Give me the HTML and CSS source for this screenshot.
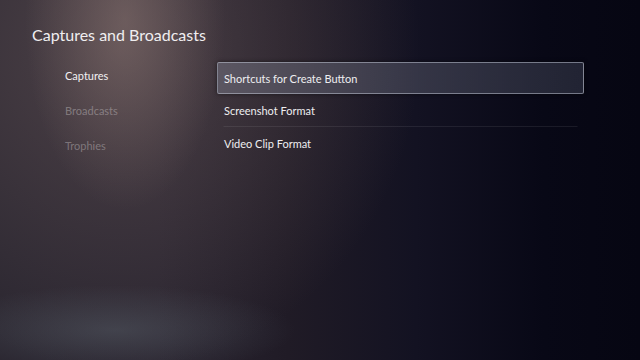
FILE: index.html
```html
<!DOCTYPE html>
<html lang="en">
<head>
    <meta charset="UTF-8">
    <meta name="viewport" content="width=device-width, initial-scale=1.0">
    <title>Captures and Broadcasts</title>
    <link rel="stylesheet" href="styles.css">
</head>
<body>
    <div class="screen">
        <h1 class="title">Captures and Broadcasts</h1>
        <div class="body">
            <ul class="side">
                <li class="side-item active">Captures</li>
                <li class="side-item">Broadcasts</li>
                <li class="side-item">Trophies</li>
            </ul>
            <ul class="options">
                <li class="option selected">Shortcuts for Create Button</li>
                <li class="option">Screenshot Format</li>
                <li class="option">Video Clip Format</li>
            </ul>
        </div>
    </div>
</body>
</html>
```

FILE: styles.css
```css
* {
	margin: 0px;
	padding: 0px;
	box-sizing: border-box;
}
body {
	width: 640px;
	height: 360px;
	overflow: hidden;
	font-family: Lato, "Open Sans", sans-serif;
	color: #e8e8ec;
	background-color: #0b0b16;
}
.screen {
	width: 640px;
	height: 360px;
	padding: 24px 0 0 32px;
	background:
		radial-gradient(ellipse 100px 190px at 125px 20px, rgba(160, 135, 128, 0.4), rgba(160, 135, 128, 0) 100%),
		radial-gradient(ellipse 180px 45px at 115px 330px, rgba(90, 98, 108, 0.45), rgba(90, 98, 108, 0) 100%),
		radial-gradient(ellipse 300px 320px at 120px 50px, rgba(105, 88, 90, 0.55), rgba(105, 88, 90, 0) 100%),
		linear-gradient(90deg, #2a2630 0%, #2a2530 25%, #201b26 45%, #131222 65%, #080816 85%, #060612 100%);
}
.title {
	font-size: 16px;
	font-weight: 400;
	line-height: 22px;
	color: #f0eef0;
}
.body {
	display: flex;
	margin-top: 16px;
}
ul {
	list-style: none;
}
.side {
	width: 185px;
	padding-left: 33px;
	padding-top: 7px;
}
.side-item {
	font-size: 11px;
	height: 35px;
	line-height: 14px;
	color: rgba(255, 255, 255, 0.3);
}
.side-item.active {
	color: #f2f0f2;
}
.options {
	width: 367px;
}
.option {
	font-size: 11px;
	height: 33px;
	line-height: 31px;
	padding-left: 6px;
	color: #eeeef0;
	border: 1px solid transparent;
}
.option + .option {
	margin-left: 6px;
	margin-right: 6px;
	padding-left: 0px;
	border-bottom: 1px solid rgba(255, 255, 255, 0.08);
}
.option:last-child {
	border-bottom: none;
}
.option.selected {
	height: 32px;
	border: 1px solid rgba(200, 205, 220, 0.5);
	border-radius: 2px;
	background: linear-gradient(90deg, rgba(120, 120, 135, 0.5), rgba(60, 64, 82, 0.5));
	box-shadow: 0 0 4px rgba(0, 0, 0, 0.5);
}
```
